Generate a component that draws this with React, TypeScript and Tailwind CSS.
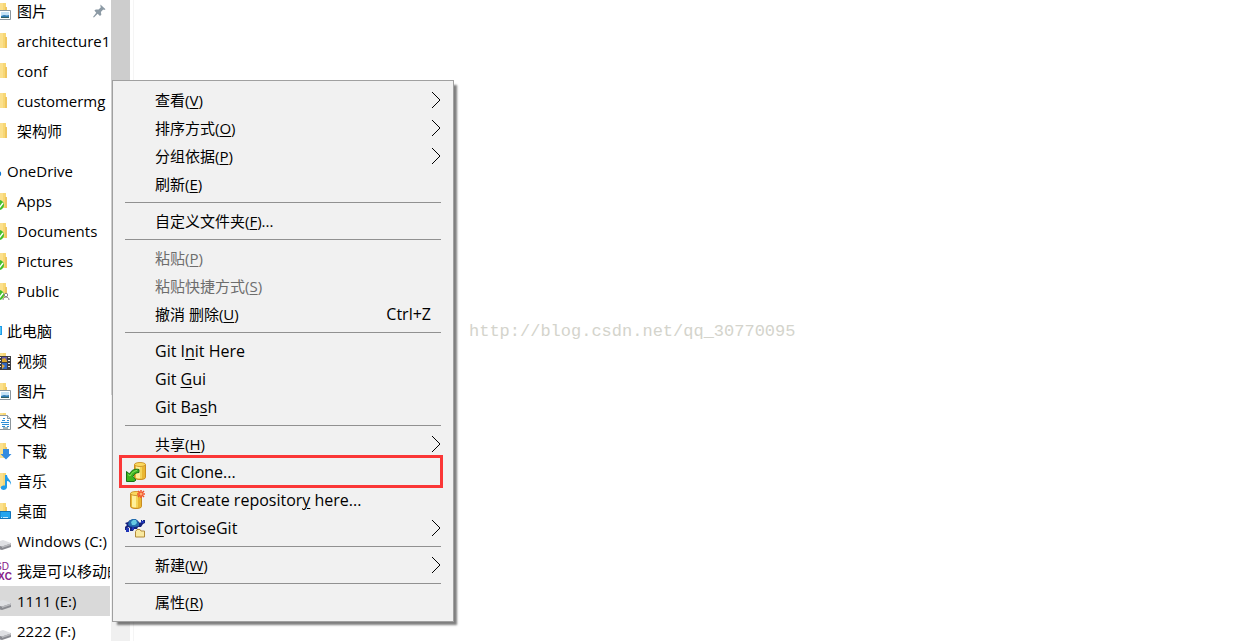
import React from 'react';

type IconName =
  | 'folder' | 'pictures' | 'synced' | 'shared' | 'cloud' | 'pc' | 'videos'
  | 'documents' | 'downloads' | 'music' | 'desktop' | 'drive' | 'sdcard';

interface NavItem {
  label: string;
  icon: IconName;
  root?: boolean;
  pinned?: boolean;
  active?: boolean;
}

interface MenuEntry {
  text: string;
  hotkey?: string;
  tail?: string;
  shortcut?: string;
  submenu?: boolean;
  disabled?: boolean;
  marked?: boolean;
  icon?: 'clone' | 'create' | 'tortoise';
}

const navGroups: NavItem[][] = [
  [
    { label: '图片', icon: 'pictures', pinned: true },
    { label: 'architecture1', icon: 'folder' },
    { label: 'conf', icon: 'folder' },
    { label: 'customermg', icon: 'folder' },
    { label: '架构师', icon: 'folder' },
  ],
  [
    { label: 'OneDrive', icon: 'cloud', root: true },
    { label: 'Apps', icon: 'synced' },
    { label: 'Documents', icon: 'synced' },
    { label: 'Pictures', icon: 'synced' },
    { label: 'Public', icon: 'shared' },
  ],
  [
    { label: '此电脑', icon: 'pc', root: true },
    { label: '视频', icon: 'videos' },
    { label: '图片', icon: 'pictures' },
    { label: '文档', icon: 'documents' },
    { label: '下载', icon: 'downloads' },
    { label: '音乐', icon: 'music' },
    { label: '桌面', icon: 'desktop' },
    { label: 'Windows (C:)', icon: 'drive' },
    { label: '我是可以移动的', icon: 'sdcard' },
    { label: '1111 (E:)', icon: 'drive', active: true },
    { label: '2222 (F:)', icon: 'drive' },
  ],
];

const menuGroups: MenuEntry[][] = [
  [
    { text: '查看(', hotkey: 'V', tail: ')', submenu: true },
    { text: '排序方式(', hotkey: 'O', tail: ')', submenu: true },
    { text: '分组依据(', hotkey: 'P', tail: ')', submenu: true },
    { text: '刷新(', hotkey: 'E', tail: ')' },
  ],
  [{ text: '自定义文件夹(', hotkey: 'F', tail: ')...' }],
  [
    { text: '粘贴(', hotkey: 'P', tail: ')', disabled: true },
    { text: '粘贴快捷方式(', hotkey: 'S', tail: ')', disabled: true },
    { text: '撤消 删除(', hotkey: 'U', tail: ')', shortcut: 'Ctrl+Z' },
  ],
  [
    { text: 'Git I', hotkey: 'n', tail: 'it Here' },
    { text: 'Git ', hotkey: 'G', tail: 'ui' },
    { text: 'Git Ba', hotkey: 's', tail: 'h' },
  ],
  [
    { text: '共享(', hotkey: 'H', tail: ')', submenu: true },
    { text: 'Git Clone...', icon: 'clone', marked: true },
    { text: 'Git Create repositor', hotkey: 'y', tail: ' here...', icon: 'create' },
    { text: '', hotkey: 'T', tail: 'ortoiseGit', icon: 'tortoise', submenu: true },
  ],
  [{ text: '新建(', hotkey: 'W', tail: ')', submenu: true }],
  [{ text: '属性(', hotkey: 'R', tail: ')' }],
];

// latin entries are set one step larger than the chinese ones
const entrySize = (text: string) => (/[\u4e00-\u9fff]/.test(text) ? 'text-[15px]' : 'text-[16px]');

const Folder = () => (
  <>
    <path d="M0 2h6v4h1v11H0z" fill="#f8d775" />
    <path d="M0 2h3v15H0z" fill="#fbe08c" />
    <path d="M5 6h2v11H5z" fill="#efc660" />
  </>
);

const Check = () => (
  <>
    <circle cx="-1" cy="14" r="5" fill="#43c02d" />
    <path d="M-2 14l2 2 3-4" fill="none" stroke="#fff" strokeWidth="1.4" />
  </>
);

const navIcons: Record<IconName, React.ReactNode> = {
  folder: <Folder />,
  pictures: (
    <>
      <Folder />
      <path d="M-1 9.500h11.500v9H-1z" fill="#fff" stroke="#8c979f" />
      <path d="M1 11h8v6H1z" fill="#c5e2f7" />
      <path d="M1 15l3-1 3 .5 2-.5v3H1z" fill="#2f7cb5" />
      <path d="M1 16h8v1H1z" fill="#315f63" />
    </>
  ),
  synced: <><Folder /><Check /></>,
  shared: (
    <>
      <Folder />
      <Check />
      <circle cx="6" cy="14" r="1.700" fill="#fff" stroke="#858585" />
      <path d="M3 19c0-4 6-4 6 0" fill="#fff" stroke="#858585" />
    </>
  ),
  cloud: <path d="M0 10.500c1.500.5 1.500 4 0 4.500z" fill="#0f7bd8" />,
  pc: (
    <>
      <path d="M0 5h2v9H0z" fill="#1e9ce8" />
      <path d="M0 6h1v7H0z" fill="#55c4f7" />
    </>
  ),
  videos: (
    <>
      <Folder />
      <path d="M0 5h11v14H0z" fill="#3d3d41" />
      <path d="M2 6h5v5H2z" fill="#6c59a9" />
      <path d="M2 8l3-1 2 3v1H2z" fill="#d7a42c" />
      <path d="M2 12h5v6H2z" fill="#2f67c5" />
      <path d="M2 13l3 2-3 3z" fill="#dfa83f" />
      <path d="M8 6h2v1H8zM8 9h2v1H8zM8 12h2v1H8zM8 15h2v1H8zM0 6h1v1H0zM0 9h1v1H0zM0 12h1v1H0zM0 15h1v1H0z" fill="#e9e9e9" />
    </>
  ),
  documents: (
    <>
      <Folder />
      <path d="M-1 4.500H7.500l3 3v11H-1z" fill="#fff" stroke="#8d969c" />
      <path d="M7.500 4.500v3h3" fill="#e4e8eb" stroke="#8d969c" />
      <path d="M3 7.500h2M2 9.500h3M7 9.500h2M1 11.500h8M2 13.500h7" stroke="#2f8fd6" />
      <path d="M2 15.500h3M7 15.500h2" stroke="#2f8fd6" />
      <path d="M3 17h5" stroke="#426a77" />
    </>
  ),
  downloads: (
    <>
      <Folder />
      <path d="M3 8h6v5h2.500L6 18.500.500 13H3z" fill="#348ce0" />
    </>
  ),
  music: (
    <>
      <Folder />
      <path d="M5 4h2c0 4 5 5 4 10-1-3-2-4-4-4v6c0 3-5 4-6 1.500S3 14 5 14.500z" fill="#249de9" />
    </>
  ),
  desktop: (
    <>
      <Folder />
      <path d="M0 10.500h10.500v7H0z" fill="#25a5ee" stroke="#1273b8" />
      <path d="M1 16h1v1H1zM3 16h5v1H3z" fill="#c6eaff" />
    </>
  ),
  drive: (
    <>
      <path d="M0 10l3-1 8 3v1L1 16l-1-.5z" fill="#dfe0e3" />
      <path d="M0 15l2 .5 9-3V16l-9 3-2-.5z" fill="#898a90" />
      <path d="M2 15.500l9-3V14l-9 3z" fill="#b9babe" />
    </>
  ),
  sdcard: (
    <g fill="#85208a" fontFamily="Liberation Sans, sans-serif">
      <text x="-5" y="9" fontSize="10">SD</text>
      <text x="-2" y="19" fontSize="10" fontWeight="700">XC</text>
    </g>
  ),
};

const Cylinder = () => (
  <>
    <path d="M.5 2.500v13c0 2.700 11 2.700 11 0v-13z" fill="#e9b632" stroke="#c98d22" />
    <path d="M2 4h4v12.500c-2 0-4-.3-4-1z" fill="#fff09a" />
    <path d="M6 4h2v12.500H6z" fill="#f5d458" />
    <ellipse cx="6" cy="2.500" rx="5.500" ry="2" fill="#fbd95e" stroke="#d09a32" />
  </>
);

const menuIcons = {
  clone: (
    <g transform="translate(1 0)">
      <g transform="translate(8 0)"><Cylinder /></g>
      <path d="M.5 19.500v-10l3 2.500c2-4 5-5.500 9.500-4.500v3c-3 0-5 1.500-6 4l3 3.500-2 1.500z" fill="#3cb51f" stroke="#176f13" />
      <path d="M2 12.500l2 1.500c2-3.500 4-5 7-5.500" fill="none" stroke="#8be060" />
    </g>
  ),
  create: (
    <g transform="translate(1 0)">
      <g transform="translate(4 1)"><Cylinder /></g>
      <path d="M15 0v8M11 4h8M12 1l6 6M18 1l-6 6" stroke="#f2512b" strokeWidth="1.500" />
      <circle cx="15" cy="4" r="1.500" fill="#ffae72" />
    </g>
  ),
  tortoise: (
    <>
      <path d="M0 5l3-1 2-2h7l3 3 1-1V2h4v3l-2 1-2 3h-3l-1 2H9l-1 2H5v-3L3 9 2 12H0V9l2-2z" fill="#15237e" />
      <path d="M3 7l1-4 3-2h4l3 4v3l-4 1-5-.5z" fill="#246dae" />
      <path d="M6 4l2-2h3l1 3-2 2H7z" fill="#68cae2" />
      <path d="M1 10h3v4H1zM7 9h2v3H7zM16 3h3v2h-3z" fill="#2035b8" />
      <path d="M17 2h1v1h-1z" fill="#bcd8ff" />
      <path d="M10.500 13.500l1.500-2h3l1 1.500h3.500v6h-9z" fill="#f9e9a0" stroke="#b28a39" />
    </>
  ),
};

const NavRow: React.FC<{ item: NavItem }> = ({ item }) => (
  <li>
    <button
      type="button"
      className={`flex h-[30px] w-full items-center overflow-hidden whitespace-nowrap text-left ${item.active ? 'bg-[#d9d9d9]' : ''}`}
    >
      <span className={`shrink-0 overflow-hidden ${item.root ? 'w-[7px]' : 'w-[17px]'}`}>
        <svg width="12" height="20" viewBox="0 0 12 20" aria-hidden="true">{navIcons[item.icon]}</svg>
      </span>
      <span className="flex-1">{item.label}</span>
      {item.pinned && (
        <svg className="mr-1 shrink-0" width="13" height="14" viewBox="0 0 14 14" fill="#8c9aa5" aria-hidden="true">
          <path d="M8 0l5.500 5-1.500 1-1-.5-2.500 2.500.5 3-1.500 1.500-2.500-2.500L1 14 0 13.500 3.500 9 1.500 6.500 3 5.500h3L8.500 3 8 2z" />
        </svg>
      )}
    </button>
  </li>
);

const MenuRow: React.FC<{ entry: MenuEntry }> = ({ entry }) => (
  <li className="relative" role="none">
    <button
      type="button"
      role="menuitem"
      disabled={entry.disabled}
      className="flex h-7 w-full items-center whitespace-nowrap px-3 text-left disabled:text-[#6d6d6d]"
    >
      <span className="w-[30px] shrink-0">
        {entry.icon && (
          <svg width="21" height="20" viewBox="0 0 21 20" aria-hidden="true">{menuIcons[entry.icon]}</svg>
        )}
      </span>
      <span className={`flex-1 ${entrySize(entry.text)}`}>
        {entry.text}
        {entry.hotkey && <u className="decoration-1 underline-offset-2">{entry.hotkey}</u>}
        {entry.tail}
      </span>
      {entry.shortcut && <span className="pr-[10px] text-[16px]">{entry.shortcut}</span>}
      {entry.submenu && (
        <svg width="10" height="18" viewBox="0 0 10 18" fill="none" stroke="#000" aria-hidden="true">
          <path d="M1 1l8 8-8 8" />
        </svg>
      )}
    </button>
    {entry.marked && (
      <span className="pointer-events-none absolute -top-[3px] -bottom-[2px] left-[6px] right-[10px] border-3 border-[#fb3737]" />
    )}
  </li>
);

const ContextMenu = () => (
  <div
    role="menu"
    className="absolute top-20 left-28 w-[342px] border border-[#a0a0a0] bg-[#f1f1f1] py-[5px] shadow-[4px_4px_2px_-1px_rgba(0,0,0,0.5)]"
  >
    {menuGroups.map((group, i) => (
      <React.Fragment key={i}>
        {i > 0 && <hr className="mx-3 my-1 border-t border-[#919191]" />}
        <ul role="none">
          {group.map((entry, j) => (
            <MenuRow key={j} entry={entry} />
          ))}
        </ul>
      </React.Fragment>
    ))}
  </div>
);

const App: React.FC = () => {
  return (
    <div className="relative flex h-screen overflow-hidden bg-white font-['Open_Sans','Noto_Sans_CJK_SC',sans-serif] text-[15px] leading-7 text-black">
      <nav className="-mt-1 flex w-[110px] shrink-0 flex-col gap-[10px]">
        {navGroups.map((group, i) => (
          <ul key={i}>
            {group.map((item, j) => (
              <NavRow key={j} item={item} />
            ))}
          </ul>
        ))}
      </nav>
      <div className="ml-px w-[19px] shrink-0 bg-[#f0f0f0]">
        <div className="h-[395px] bg-[#cdcdcd]" />
      </div>
      <main className="ml-[3px] flex-1 border-l border-[#f5f5f5]" />
      <ContextMenu />
      <p className="pointer-events-none absolute top-[318px] left-[469px] font-['Liberation_Mono',monospace] text-[17px] text-[#d4d4cc]">
        http://blog.csdn.net/qq_30770095
      </p>
    </div>
  );
};

export default App;
